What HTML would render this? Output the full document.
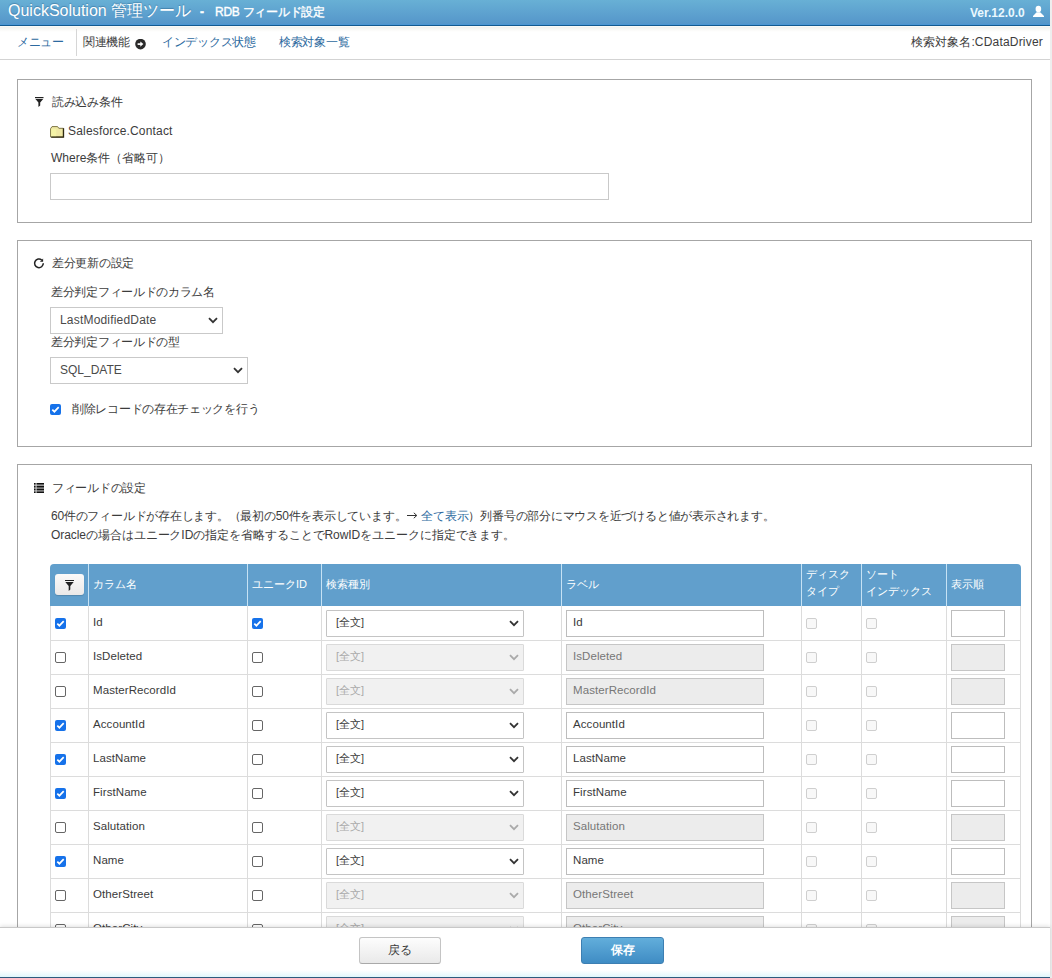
<!DOCTYPE html>
<html lang="ja"><head><meta charset="utf-8">
<style>
html,body{margin:0;padding:0;}
body{width:1052px;height:978px;overflow:hidden;position:relative;background:#fff;font-family:"Liberation Sans",sans-serif;font-size:12px;color:#3c3c3c;}
.a{position:absolute;white-space:nowrap;}
#hdr{left:0;top:0;width:1050px;height:24px;background:linear-gradient(#68b0d5,#5596ca);}
#hdr1{left:0;top:24px;width:1050px;height:1px;background:#4b96d4;}
#hdr2{left:0;top:25px;width:1050px;height:1px;background:#135a90;}
#nav{left:0;top:26px;width:1050px;height:33px;background:linear-gradient(#fff 0px,#f3f2ee 1px,#fff 6px);}
#navb{left:0;top:59px;width:1050px;height:1px;background:#d3d3d3;}
#sb{left:1050px;top:0;width:2px;height:978px;background:#eeeeee;}
.box{position:absolute;left:17px;width:1013px;border:1px solid #a6a6a6;background:#fff;}
.lnk{color:#2d6aa0;}
.t{position:absolute;white-space:nowrap;line-height:14px;}
.cbc{width:11px;height:11px;border-radius:2px;background:#1672ea;}
.cbc svg{position:absolute;left:0;top:0;}
.cbu{width:9px;height:9px;border-radius:2px;border:1px solid #666;background:#fff;}
.cbd{width:9px;height:9px;border-radius:2px;border:1px solid #cfcfcf;background:#f8f8f8;}
.fbtn{width:29px;height:21px;border-radius:3px;background:linear-gradient(#fbfaf9,#ebe9e8);box-shadow:0 1px 1px rgba(0,0,0,0.15);}
.ht{color:#fff;font-size:11px;}
.rt{font-size:11.5px;color:#3a3a3a;letter-spacing:0.08px;}
.rt.dis{color:#777;}
.sel{width:196px;height:25px;border:1px solid #c4c4c4;background:#fff;border-radius:1px;}
.sel.dis{background:#f1f1f1;border-color:#dadada;}
.st{font-size:11px;color:#3c3c3c;}
.st.dis{color:#aaa;}
.inp{width:196px;height:25px;border:1px solid #bdbdbd;background:#fff;}
.inp.dis{background:#ececec;border-color:#c6c6c6;}
.ord{width:52px;height:25px;border:1px solid #bdbdbd;background:#fff;}
.ord.dis{background:#ececec;border-color:#c6c6c6;}
.btn{border:1px solid #c4c4c4;border-bottom-color:#a9a9a9;border-radius:3px;background:linear-gradient(#fdfdfd,#e9e9e9);text-align:center;line-height:25px;font-size:12px;color:#3c3c3c;}
.btn2{border:1px solid #3d7fb2;border-radius:3px;background:linear-gradient(#62aedb,#3f8cc4);text-align:center;line-height:25px;font-size:12px;font-weight:bold;color:#fff;}
</style></head>
<body>
<div id="sb" class="a"></div>
<div id="hdr" class="a"></div>
<div id="hdr1" class="a"></div>
<div id="hdr2" class="a"></div>
<div class="t" style="left:8px;top:2px;font-size:16px;line-height:18px;color:#fff;text-shadow:0 -1px 1px rgba(0,50,90,0.3);">QuickSolution 管理ツール</div>
<div class="t" style="left:200px;top:5px;font-size:12px;font-weight:bold;color:#fff;-webkit-text-stroke:0.4px #fff;">-</div>
<div class="t" style="left:215px;top:5px;font-size:12px;color:#fff;-webkit-text-stroke:0.35px #fff;letter-spacing:-0.25px;">RDB フィールド設定</div>
<div class="t" style="left:970px;top:6px;font-size:12px;font-weight:bold;color:#eaf8ff;">Ver.12.0.0</div>
<svg class="a" style="left:1032px;top:5px" width="13" height="13" viewBox="0 0 13 13"><ellipse cx="6.4" cy="4" rx="2.8" ry="3.3" fill="#fff"/><path d="M4.6 7.3 L8.2 7.3 L12 10.9 L12 12 L1 12 L1 10.9 Z" fill="#fff"/></svg>
<div id="nav" class="a"></div>
<div id="navb" class="a"></div>
<div class="t lnk" style="left:17px;top:35px;letter-spacing:-0.3px;">メニュー</div>
<div class="a" style="left:76px;top:29px;width:1px;height:27px;background:#d6d6d6;"></div>
<div class="t" style="left:83px;top:35px;letter-spacing:-0.3px;">関連機能</div>
<svg class="a" style="left:135px;top:39px" width="11" height="11" viewBox="0 0 11 11"><circle cx="5.5" cy="5.1" r="5.3" fill="#2a2a2a"/><path d="M2.6 5.1 H6" stroke="#fff" stroke-width="1.7" fill="none"/><path d="M5.3 2.5 L8.4 5.1 L5.3 7.7 Z" fill="#fff"/></svg>
<div class="t lnk" style="left:162px;top:35px;letter-spacing:-0.3px;">インデックス状態</div>
<div class="t lnk" style="left:279px;top:35px;letter-spacing:-0.3px;">検索対象一覧</div>
<div class="t" style="right:9px;top:35px;">検索対象名:<span style="letter-spacing:0.2px">CDataDriver</span></div>

<!-- box 1 -->
<div class="box" style="top:79px;height:142px;"></div>
<svg class="a" style="left:35px;top:97px" width="9" height="11" viewBox="0 0 9 11"><rect x="0" y="0" width="8.5" height="1.2" fill="#222"/><path d="M0.4 2 L8.2 2 L5.2 5.5 L5.2 8.6 L3.4 10 L3.4 5.5 Z" fill="#222"/></svg>
<div class="t" style="left:52px;top:95px;letter-spacing:-0.3px;">読み込み条件</div>
<svg class="a" style="left:50px;top:126px" width="15" height="12" viewBox="0 0 15 12"><path d="M0.6 11 V2.6 L2 0.6 H7.6 L8.8 2.3 H13.4 V11 Z" fill="#efe8a4" stroke="#7d7646" stroke-width="1"/><rect x="1.2" y="3" width="5" height="7.5" fill="#f4f3a6"/><path d="M13.5 2.3 V11.2 H1.2" stroke="#2f2a12" stroke-width="1.3" fill="none"/></svg>
<div class="t" style="left:68px;top:124px;"><span style="letter-spacing:0.18px">Salesforce.Contact</span></div>
<div class="t" style="left:51px;top:151px;">Where条件（省略可）</div>
<div class="a" style="left:50px;top:173px;width:557px;height:25px;border:1px solid #c9c9c9;"></div>

<!-- box 2 -->
<div class="box" style="top:240px;height:205px;"></div>
<svg class="a" style="left:33px;top:257px" width="12" height="13" viewBox="0 0 12 13"><path d="M10.3 6.35 A4.35 4.35 0 1 1 8.75 3.0" stroke="#222" stroke-width="1.55" fill="none"/><path d="M6.9 4.75 L10.1 4.75 L10.1 1.6 Z" fill="#222"/></svg>
<div class="t" style="left:52px;top:256px;letter-spacing:-0.3px;">差分更新の設定</div>
<div class="t" style="left:51px;top:285px;letter-spacing:-0.3px;">差分判定フィールドのカラム名</div>
<div class="a" style="left:50px;top:307px;width:171px;height:25px;border:1px solid #c9c9c9;"></div>
<div class="t" style="left:60px;top:313px;color:#4a4a4a;"><span style="letter-spacing:0.19px">LastModifiedDate</span></div>
<svg class="a" style="left:208px;top:317px" width="10" height="7" viewBox="0 0 10 7"><path d="M1 1.2 L5 5.2 L9 1.2" stroke="#333" stroke-width="1.8" fill="none"/></svg>
<div class="t" style="left:51px;top:335px;letter-spacing:-0.3px;">差分判定フィールドの型</div>
<div class="a" style="left:50px;top:357px;width:196px;height:25px;border:1px solid #c9c9c9;"></div>
<div class="t" style="left:60px;top:363px;color:#4a4a4a;">SQL_DATE</div>
<svg class="a" style="left:233px;top:367px" width="10" height="7" viewBox="0 0 10 7"><path d="M1 1.2 L5 5.2 L9 1.2" stroke="#333" stroke-width="1.8" fill="none"/></svg>
<div class="a cbc" style="left:50px;top:404px;"><svg width="11" height="11" viewBox="0 0 11 11"><path d="M2.3 5.6 L4.4 7.7 L8.7 3.2" stroke="#fff" stroke-width="1.7" fill="none"/></svg></div>
<div class="t" style="left:72px;top:402px;letter-spacing:-0.3px;">削除レコードの存在チェックを行う</div>

<!-- box 3 -->
<div class="box" style="top:464px;height:600px;"></div>
<svg class="a" style="left:34px;top:483px" width="10" height="10" viewBox="0 0 10 10"><rect x="0" y="0" width="10" height="10" fill="#9a9a9a"/><rect x="0" y="0" width="10" height="1.4" fill="#111"/><rect x="0" y="3" width="10" height="1.4" fill="#111"/><rect x="0" y="5.8" width="10" height="1.4" fill="#111"/><rect x="0" y="8.6" width="10" height="1.4" fill="#111"/><rect x="1.5" y="0" width="1.2" height="10" fill="#ddd" opacity="0.8"/></svg>
<div class="t" style="left:52px;top:481px;letter-spacing:-0.3px;">フィールドの設定</div>
<div class="t" style="left:51px;top:509px;letter-spacing:-0.23px;">60件のフィールドが存在します。（最初の50件を表示しています。<svg width="11" height="7" viewBox="0 0 11 7" style="vertical-align:1px;margin:0 3px 0 1px"><path d="M0 3.5 H9.5 M6.8 0.8 L9.8 3.5 L6.8 6.2" stroke="#333" stroke-width="1" fill="none"/></svg><span class="lnk">全て表示</span>）列番号の部分にマウスを近づけると値が表示されます。</div>
<div class="t" style="left:51px;top:528px;letter-spacing:-0.07px;">Oracleの場合はユニークIDの指定を省略することでRowIDをユニークに指定できます。</div>

<div class="a" style="left:50px;top:564px;width:971px;height:42px;background:#619fcc;border-radius:4px 4px 0 0;"></div>
<div class="a" style="left:88px;top:564px;width:1px;height:42px;background:#c6e2f4;"></div>
<div class="a" style="left:247px;top:564px;width:1px;height:42px;background:#c6e2f4;"></div>
<div class="a" style="left:321px;top:564px;width:1px;height:42px;background:#c6e2f4;"></div>
<div class="a" style="left:561px;top:564px;width:1px;height:42px;background:#c6e2f4;"></div>
<div class="a" style="left:801px;top:564px;width:1px;height:42px;background:#c6e2f4;"></div>
<div class="a" style="left:861px;top:564px;width:1px;height:42px;background:#c6e2f4;"></div>
<div class="a" style="left:946px;top:564px;width:1px;height:42px;background:#c6e2f4;"></div>
<div class="a fbtn" style="left:55px;top:574px;"><svg class="a" style="left:10px;top:6px" width="9" height="11" viewBox="0 0 9 11"><rect x="0" y="0" width="9" height="1" fill="#222"/><path d="M0.3 2 L8.7 2 L5.3 6 L5.3 9.6 L3.7 11 L3.7 6 Z" fill="#222"/></svg></div>
<div class="t ht" style="left:93px;top:577px;">カラム名</div>
<div class="t ht" style="left:252px;top:577px;">ユニークID</div>
<div class="t ht" style="left:326px;top:577px;">検索種別</div>
<div class="t ht" style="left:566px;top:577px;">ラベル</div>
<div class="t ht" style="left:951px;top:577px;">表示順</div>
<div class="t ht" style="left:806px;top:566px;line-height:17px;">ディスク<br>タイプ</div>
<div class="t ht" style="left:866px;top:566px;line-height:17px;">ソート<br>インデックス</div>
<div class="a" style="left:50px;top:606px;width:1px;height:321px;background:#dcdcdc;"></div>
<div class="a" style="left:1020px;top:606px;width:1px;height:321px;background:#dcdcdc;"></div>
<div class="a" style="left:88px;top:606px;width:1px;height:321px;background:#dcdcdc;"></div>
<div class="a" style="left:247px;top:606px;width:1px;height:321px;background:#dcdcdc;"></div>
<div class="a" style="left:321px;top:606px;width:1px;height:321px;background:#dcdcdc;"></div>
<div class="a" style="left:561px;top:606px;width:1px;height:321px;background:#dcdcdc;"></div>
<div class="a" style="left:801px;top:606px;width:1px;height:321px;background:#dcdcdc;"></div>
<div class="a" style="left:861px;top:606px;width:1px;height:321px;background:#dcdcdc;"></div>
<div class="a" style="left:946px;top:606px;width:1px;height:321px;background:#dcdcdc;"></div>
<div class="a cbc" style="left:55px;top:618px;"><svg width="11" height="11" viewBox="0 0 11 11"><path d="M2.3 5.6 L4.4 7.7 L8.7 3.2" stroke="#fff" stroke-width="1.7" fill="none"/></svg></div>
<div class="t rt" style="left:93px;top:615px;">Id</div>
<div class="a cbc" style="left:252px;top:618px;"><svg width="11" height="11" viewBox="0 0 11 11"><path d="M2.3 5.6 L4.4 7.7 L8.7 3.2" stroke="#fff" stroke-width="1.7" fill="none"/></svg></div>
<div class="a sel" style="left:326px;top:610px;"></div>
<div class="t st" style="left:336px;top:615px;">[全文]</div>
<svg class="a" style="left:509px;top:620px;" width="10" height="7" viewBox="0 0 10 7"><path d="M1 1.2 L5 5.2 L9 1.2" stroke="#333" stroke-width="1.8" fill="none"/></svg>
<div class="a inp" style="left:566px;top:610px;"></div>
<div class="t rt" style="left:573px;top:615px;">Id</div>
<div class="a cbd" style="left:806px;top:618px;"></div>
<div class="a cbd" style="left:866px;top:618px;"></div>
<div class="a ord" style="left:951px;top:610px;"></div>
<div class="a" style="left:50px;top:640px;width:971px;height:1px;background:#dcdcdc;"></div>
<div class="a cbu" style="left:55px;top:652px;"></div>
<div class="t rt" style="left:93px;top:649px;">IsDeleted</div>
<div class="a cbu" style="left:252px;top:652px;"></div>
<div class="a sel dis" style="left:326px;top:644px;"></div>
<div class="t st dis" style="left:336px;top:649px;">[全文]</div>
<svg class="a" style="left:509px;top:654px;" width="10" height="7" viewBox="0 0 10 7"><path d="M1 1.2 L5 5.2 L9 1.2" stroke="#aaa" stroke-width="1.8" fill="none"/></svg>
<div class="a inp dis" style="left:566px;top:644px;"></div>
<div class="t rt dis" style="left:573px;top:649px;">IsDeleted</div>
<div class="a cbd" style="left:806px;top:652px;"></div>
<div class="a cbd" style="left:866px;top:652px;"></div>
<div class="a ord dis" style="left:951px;top:644px;"></div>
<div class="a" style="left:50px;top:674px;width:971px;height:1px;background:#dcdcdc;"></div>
<div class="a cbu" style="left:55px;top:686px;"></div>
<div class="t rt" style="left:93px;top:683px;">MasterRecordId</div>
<div class="a cbu" style="left:252px;top:686px;"></div>
<div class="a sel dis" style="left:326px;top:678px;"></div>
<div class="t st dis" style="left:336px;top:683px;">[全文]</div>
<svg class="a" style="left:509px;top:688px;" width="10" height="7" viewBox="0 0 10 7"><path d="M1 1.2 L5 5.2 L9 1.2" stroke="#aaa" stroke-width="1.8" fill="none"/></svg>
<div class="a inp dis" style="left:566px;top:678px;"></div>
<div class="t rt dis" style="left:573px;top:683px;">MasterRecordId</div>
<div class="a cbd" style="left:806px;top:686px;"></div>
<div class="a cbd" style="left:866px;top:686px;"></div>
<div class="a ord dis" style="left:951px;top:678px;"></div>
<div class="a" style="left:50px;top:708px;width:971px;height:1px;background:#dcdcdc;"></div>
<div class="a cbc" style="left:55px;top:720px;"><svg width="11" height="11" viewBox="0 0 11 11"><path d="M2.3 5.6 L4.4 7.7 L8.7 3.2" stroke="#fff" stroke-width="1.7" fill="none"/></svg></div>
<div class="t rt" style="left:93px;top:717px;">AccountId</div>
<div class="a cbu" style="left:252px;top:720px;"></div>
<div class="a sel" style="left:326px;top:712px;"></div>
<div class="t st" style="left:336px;top:717px;">[全文]</div>
<svg class="a" style="left:509px;top:722px;" width="10" height="7" viewBox="0 0 10 7"><path d="M1 1.2 L5 5.2 L9 1.2" stroke="#333" stroke-width="1.8" fill="none"/></svg>
<div class="a inp" style="left:566px;top:712px;"></div>
<div class="t rt" style="left:573px;top:717px;">AccountId</div>
<div class="a cbd" style="left:806px;top:720px;"></div>
<div class="a cbd" style="left:866px;top:720px;"></div>
<div class="a ord" style="left:951px;top:712px;"></div>
<div class="a" style="left:50px;top:742px;width:971px;height:1px;background:#dcdcdc;"></div>
<div class="a cbc" style="left:55px;top:754px;"><svg width="11" height="11" viewBox="0 0 11 11"><path d="M2.3 5.6 L4.4 7.7 L8.7 3.2" stroke="#fff" stroke-width="1.7" fill="none"/></svg></div>
<div class="t rt" style="left:93px;top:751px;">LastName</div>
<div class="a cbu" style="left:252px;top:754px;"></div>
<div class="a sel" style="left:326px;top:746px;"></div>
<div class="t st" style="left:336px;top:751px;">[全文]</div>
<svg class="a" style="left:509px;top:756px;" width="10" height="7" viewBox="0 0 10 7"><path d="M1 1.2 L5 5.2 L9 1.2" stroke="#333" stroke-width="1.8" fill="none"/></svg>
<div class="a inp" style="left:566px;top:746px;"></div>
<div class="t rt" style="left:573px;top:751px;">LastName</div>
<div class="a cbd" style="left:806px;top:754px;"></div>
<div class="a cbd" style="left:866px;top:754px;"></div>
<div class="a ord" style="left:951px;top:746px;"></div>
<div class="a" style="left:50px;top:776px;width:971px;height:1px;background:#dcdcdc;"></div>
<div class="a cbc" style="left:55px;top:788px;"><svg width="11" height="11" viewBox="0 0 11 11"><path d="M2.3 5.6 L4.4 7.7 L8.7 3.2" stroke="#fff" stroke-width="1.7" fill="none"/></svg></div>
<div class="t rt" style="left:93px;top:785px;">FirstName</div>
<div class="a cbu" style="left:252px;top:788px;"></div>
<div class="a sel" style="left:326px;top:780px;"></div>
<div class="t st" style="left:336px;top:785px;">[全文]</div>
<svg class="a" style="left:509px;top:790px;" width="10" height="7" viewBox="0 0 10 7"><path d="M1 1.2 L5 5.2 L9 1.2" stroke="#333" stroke-width="1.8" fill="none"/></svg>
<div class="a inp" style="left:566px;top:780px;"></div>
<div class="t rt" style="left:573px;top:785px;">FirstName</div>
<div class="a cbd" style="left:806px;top:788px;"></div>
<div class="a cbd" style="left:866px;top:788px;"></div>
<div class="a ord" style="left:951px;top:780px;"></div>
<div class="a" style="left:50px;top:810px;width:971px;height:1px;background:#dcdcdc;"></div>
<div class="a cbu" style="left:55px;top:822px;"></div>
<div class="t rt" style="left:93px;top:819px;">Salutation</div>
<div class="a cbu" style="left:252px;top:822px;"></div>
<div class="a sel dis" style="left:326px;top:814px;"></div>
<div class="t st dis" style="left:336px;top:819px;">[全文]</div>
<svg class="a" style="left:509px;top:824px;" width="10" height="7" viewBox="0 0 10 7"><path d="M1 1.2 L5 5.2 L9 1.2" stroke="#aaa" stroke-width="1.8" fill="none"/></svg>
<div class="a inp dis" style="left:566px;top:814px;"></div>
<div class="t rt dis" style="left:573px;top:819px;">Salutation</div>
<div class="a cbd" style="left:806px;top:822px;"></div>
<div class="a cbd" style="left:866px;top:822px;"></div>
<div class="a ord dis" style="left:951px;top:814px;"></div>
<div class="a" style="left:50px;top:844px;width:971px;height:1px;background:#dcdcdc;"></div>
<div class="a cbc" style="left:55px;top:856px;"><svg width="11" height="11" viewBox="0 0 11 11"><path d="M2.3 5.6 L4.4 7.7 L8.7 3.2" stroke="#fff" stroke-width="1.7" fill="none"/></svg></div>
<div class="t rt" style="left:93px;top:853px;">Name</div>
<div class="a cbu" style="left:252px;top:856px;"></div>
<div class="a sel" style="left:326px;top:848px;"></div>
<div class="t st" style="left:336px;top:853px;">[全文]</div>
<svg class="a" style="left:509px;top:858px;" width="10" height="7" viewBox="0 0 10 7"><path d="M1 1.2 L5 5.2 L9 1.2" stroke="#333" stroke-width="1.8" fill="none"/></svg>
<div class="a inp" style="left:566px;top:848px;"></div>
<div class="t rt" style="left:573px;top:853px;">Name</div>
<div class="a cbd" style="left:806px;top:856px;"></div>
<div class="a cbd" style="left:866px;top:856px;"></div>
<div class="a ord" style="left:951px;top:848px;"></div>
<div class="a" style="left:50px;top:878px;width:971px;height:1px;background:#dcdcdc;"></div>
<div class="a cbu" style="left:55px;top:890px;"></div>
<div class="t rt" style="left:93px;top:887px;">OtherStreet</div>
<div class="a cbu" style="left:252px;top:890px;"></div>
<div class="a sel dis" style="left:326px;top:882px;"></div>
<div class="t st dis" style="left:336px;top:887px;">[全文]</div>
<svg class="a" style="left:509px;top:892px;" width="10" height="7" viewBox="0 0 10 7"><path d="M1 1.2 L5 5.2 L9 1.2" stroke="#aaa" stroke-width="1.8" fill="none"/></svg>
<div class="a inp dis" style="left:566px;top:882px;"></div>
<div class="t rt dis" style="left:573px;top:887px;">OtherStreet</div>
<div class="a cbd" style="left:806px;top:890px;"></div>
<div class="a cbd" style="left:866px;top:890px;"></div>
<div class="a ord dis" style="left:951px;top:882px;"></div>
<div class="a" style="left:50px;top:912px;width:971px;height:1px;background:#dcdcdc;"></div>
<div class="a cbu" style="left:55px;top:924px;"></div>
<div class="t rt" style="left:93px;top:921px;">OtherCity</div>
<div class="a cbu" style="left:252px;top:924px;"></div>
<div class="a sel dis" style="left:326px;top:916px;"></div>
<div class="t st dis" style="left:336px;top:921px;">[全文]</div>
<svg class="a" style="left:509px;top:926px;" width="10" height="7" viewBox="0 0 10 7"><path d="M1 1.2 L5 5.2 L9 1.2" stroke="#aaa" stroke-width="1.8" fill="none"/></svg>
<div class="a inp dis" style="left:566px;top:916px;"></div>
<div class="t rt dis" style="left:573px;top:921px;">OtherCity</div>
<div class="a cbd" style="left:806px;top:924px;"></div>
<div class="a cbd" style="left:866px;top:924px;"></div>
<div class="a ord dis" style="left:951px;top:916px;"></div>

<!-- footer -->
<div class="a" style="left:0;top:927px;width:1050px;height:51px;background:linear-gradient(#fff 0px,#fff 42px,#dff7fb 49px);border-top:1px solid #c8c8c8;box-sizing:border-box;box-shadow:0 -1px 4px rgba(0,0,0,0.12);"></div>
<div class="a" style="left:0;top:977px;width:1050px;height:1px;background:#2d5b7d;"></div>
<div class="a btn" style="left:359px;top:937px;width:80px;height:25px;">戻る</div>
<div class="a btn2" style="left:581px;top:937px;width:81px;height:25px;">保存</div>
</body></html>
